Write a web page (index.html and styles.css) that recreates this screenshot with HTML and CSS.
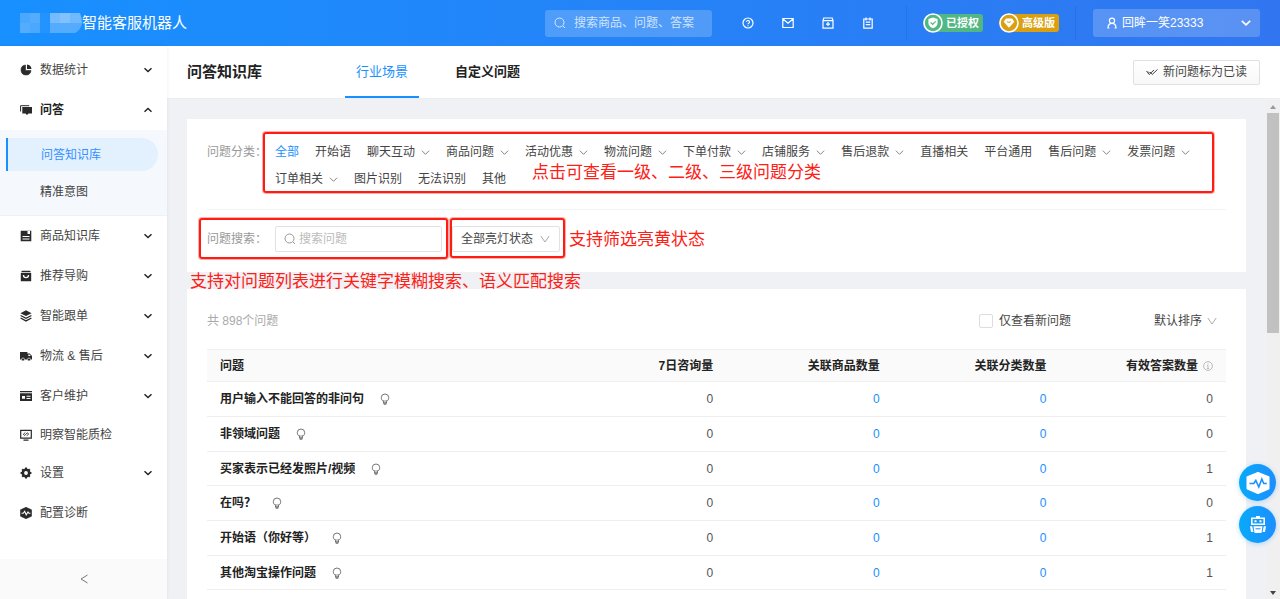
FILE: index.html
```html
<!DOCTYPE html>
<html lang="zh-CN">
<head>
<meta charset="utf-8">
<title>智能客服机器人</title>
<link rel="stylesheet" href="styles.css">
</head>
<body>
<svg class="defs" aria-hidden="true">
  <symbol id="chev" viewBox="0 0 10 10"><path d="M1 3l4 4 4-4" fill="none" stroke="currentColor"/></symbol>
  <symbol id="chev-deep" viewBox="0 0 10 10"><path d="M.8 2L5 8l4.200-6" fill="none" stroke="currentColor"/></symbol>
  <symbol id="chev-b" viewBox="0 0 10 10"><path d="M1.500 3.200L5 6.600l3.500-3.400" fill="none" stroke="currentColor" stroke-width="1.400"/></symbol>
  <symbol id="search" viewBox="0 0 12 12"><circle cx="5.500" cy="5.500" r="4.500" fill="none" stroke="currentColor"/><path d="M9 9l2 2" stroke="currentColor"/></symbol>
  <symbol id="bulb" viewBox="0 0 12 12"><path d="M4.500 8.300C3 7.600 2.300 6.300 2.300 4.700a3.700 3.700 0 0 1 7.400 0c0 1.600-.7 2.900-2.200 3.600v2h-3z" fill="none" stroke="currentColor" stroke-width=".9"/><path d="M4.500 9.200h3M4.700 11.300h2.600M4.900 8.300V7M7.100 8.300V7" stroke="currentColor" fill="none" stroke-width=".9"/></symbol>
</svg>

<header class="top">
  <div class="brand">
    <svg width="62" height="20" viewBox="0 0 62 20"><g fill="#fff"><path opacity=".22" d="M0 0h10v10H0zM10 10h10v10H10z"/><path opacity=".26" d="M10 0h10v10H10zM0 10h10v10H0z"/><path opacity=".04" d="M20 0h10v20H20z"/><path opacity=".4" d="M30 0h10v10H30z"/><path opacity=".45" d="M40 0h10v10H40z"/><path opacity=".38" d="M50 0h10q2 5 2 10H50z"/><path opacity=".26" d="M30 10h32q-1 7-7 10H30z"/></g></svg>
    <span>智能客服机器人</span>
  </div>
  <label class="top-search">
    <svg width="12" height="12"><use href="#search"/></svg>
    <input type="text" placeholder="搜索商品、问题、答案" aria-label="搜索商品、问题、答案">
  </label>
  <nav class="top-icons" aria-label="工具">
    <a href="#" aria-label="帮助"><svg width="12" height="12" viewBox="0 0 12 12" fill="none" stroke="currentColor"><circle cx="6" cy="6" r="5" stroke-width="1.200"/><path d="M4.500 5a1.500 1.500 0 1 1 2.200 1.300C6.200 6.600 6 6.800 6 7.300M6 8.200v1.100" stroke-width="1.100"/></svg></a>
    <a href="#" aria-label="邮件"><svg width="12" height="12" viewBox="0 0 12 12" fill="none" stroke="currentColor" stroke-width="1.200"><path d="M.8 1.500h10.400v9H.8zM1 2l5 4.300L11 2"/></svg></a>
    <a href="#" aria-label="下载"><svg width="12" height="12" viewBox="0 0 12 12" fill="none" stroke="currentColor" stroke-width="1.200"><path d="M1.800 1h8.400l.8 2.500v7.700H1V3.500zM1 3.700h10M6 5v4M4 7.200h4"/></svg></a>
    <a href="#" aria-label="记事"><svg width="12" height="12" viewBox="0 0 12 12" fill="none" stroke="currentColor" stroke-width="1.200"><path d="M1.800 2h8.400v9.200H1.800zM4 .4v3M8 .4v3M3.800 5.200h4.500M3.800 7.700h4.500"/></svg></a>
  </nav>
  <div class="badges">
    <span class="badge green"><svg width="20" height="20" viewBox="0 0 20 20"><circle cx="10" cy="10" r="9" fill="#52b883" stroke="#fff" stroke-width="1.600"/><path d="M10 4.600l4.600 1.500v3.800c0 2.600-2 4.500-4.600 5.400-2.600-.9-4.600-2.800-4.600-5.400V6.100z" fill="#fff"/><path d="M7.700 9.500l1.900 1.900 3.100-3" fill="none" stroke="#52b883" stroke-width="1.300"/></svg>已授权</span>
    <span class="badge gold"><svg width="20" height="20" viewBox="0 0 20 20"><circle cx="10" cy="10" r="9" fill="#d9a012" stroke="#fff" stroke-width="1.600"/><path d="M7 5.500h6l2.300 3.200L10 14.800 4.700 8.700z" fill="#fff"/><path d="M8 8.600q2 1.600 4 0" fill="none" stroke="#d9a012"/></svg>高级版</span>
  </div>
  <button class="user" type="button">
    <svg width="12" height="12" viewBox="0 0 12 12" fill="none" stroke="currentColor" stroke-width="1.200"><circle cx="6" cy="3.700" r="2.600"/><path d="M2 11c0-2.800 1.500-4.600 4-4.600s4 1.800 4 4.600M1.400 11h2M8.600 11h2"/></svg>
    <span>回眸一笑23333</span>
    <svg width="12" height="12"><use href="#chev-b"/></svg>
  </button>
</header>

<div class="shell">
  <aside class="side">
    <nav class="menu" aria-label="主菜单">
      <a class="item" href="#"><svg class="ico" viewBox="0 0 12 12"><path d="M5.500 1v5.500H11A5 5 0 1 1 5.500 1z" fill="currentColor" stroke="currentColor" stroke-width=".6"/><path d="M7 .5A5 5 0 0 1 11.500 5H7z" fill="currentColor"/></svg><span>数据统计</span><svg class="arrow"><use href="#chev-b"/></svg></a>
      <a class="item open" href="#"><svg class="ico" viewBox="0 0 12 12"><path d="M.6 7.500V1.700h8.600" fill="none" stroke="currentColor"/><path d="M2.300 3H12v6.500H8.500L7 11 5.500 9.500H2.300z" fill="currentColor"/></svg><span>问答</span><svg class="arrow"><use href="#chev-b"/></svg></a>
      <div class="sub">
        <a class="active" href="#">问答知识库</a>
        <a href="#">精准意图</a>
      </div>
      <a class="item" href="#"><svg class="ico" viewBox="0 0 12 12"><path fill-rule="evenodd" d="M1 .8h10.300v10.400H.7V1zM2.500 6v1h7V6zM2.500 8.500v1h7v-1zM7.500 1v3H10V1z" fill="currentColor"/></svg><span>商品知识库</span><svg class="arrow"><use href="#chev-b"/></svg></a>
      <a class="item" href="#"><svg class="ico" viewBox="0 0 12 12"><path d="M2 .8h8l1 1.500H1zM.8 3h10.400v8.200H.8z" fill="currentColor"/><path d="M3.500 5c0 3.500 5 3.500 5 0" fill="none" stroke="#fff" stroke-width="1.300"/></svg><span>推荐导购</span><svg class="arrow"><use href="#chev-b"/></svg></a>
      <a class="item" href="#"><svg class="ico" viewBox="0 0 12 12"><path d="M6 .3l5.600 2.900L6 6.100.4 3.200z" fill="currentColor"/><path d="M.6 5.500L6 8.300l5.400-2.800M.6 8L6 10.900 11.400 8" fill="none" stroke="currentColor" stroke-width="1.300"/></svg><span>智能跟单</span><svg class="arrow"><use href="#chev-b"/></svg></a>
      <a class="item" href="#"><svg class="ico" viewBox="0 0 12 12"><path fill-rule="evenodd" d="M0 2h7.400v1.500h2.300L12 6v3.500H0zM8.300 4.500V6h2.500L9.500 4.500z" fill="currentColor"/><g fill="currentColor" stroke="#fff" stroke-width=".6"><circle cx="3" cy="9.500" r="1.500"/><circle cx="9" cy="9.500" r="1.500"/></g></svg><span>物流 &amp; 售后</span><svg class="arrow"><use href="#chev-b"/></svg></a>
      <a class="item" href="#"><svg class="ico" viewBox="0 0 12 12"><path fill-rule="evenodd" d="M0 1h12v1.300H0zM0 3.200h12V11H0zM2 6v2.800h3V6zM6.500 5.700v1h4v-1zM6.500 8v1h4V8z" fill="currentColor"/></svg><span>客户维护</span><svg class="arrow"><use href="#chev-b"/></svg></a>
      <a class="item short" href="#"><svg class="ico" viewBox="0 0 12 12" fill="none" stroke="currentColor" stroke-width="1.200"><path d="M.7 1.300h10.600v7.900H.7zM3.500 11.200h5"/><path d="M5.300 3.500L3.300 5.300l1.400 1.200 2.600-2.700 1.400 1.200-2 1.800" stroke-width=".9"/></svg><span>明察智能质检</span></a>
      <a class="item" href="#"><svg class="ico" viewBox="0 0 12 12"><circle cx="6" cy="6" r="3.200" fill="none" stroke="currentColor" stroke-width="2.600"/><path d="M6 .6v2M6 9.400v2M.6 6h2M9.400 6h2M2.200 2.200l1.400 1.400M8.400 8.400l1.400 1.400M9.800 2.200L8.400 3.600M3.600 8.400L2.200 9.800" stroke="currentColor" stroke-width="2"/></svg><span>设置</span><svg class="arrow"><use href="#chev-b"/></svg></a>
      <a class="item" href="#"><svg class="ico" viewBox="0 0 12 12"><path d="M6 .3l5.500 2.500v6.400L6 11.700.5 9.200V2.800z" fill="currentColor" stroke="currentColor" stroke-linejoin="round" stroke-width=".6"/><path d="M1.500 6.300h1.700l1.500-1.900 1.500 3.400L8 5l.9 1.300h1.600" fill="none" stroke="#fff" stroke-width="1.100"/></svg><span>配置诊断</span></a>
    </nav>
    <button class="collapse" type="button" aria-label="收起菜单"><svg width="10" height="10" viewBox="0 0 10 10"><path d="M8.500 1L2 5l6.500 4" fill="none" stroke="currentColor"/></svg></button>
  </aside>

  <main class="main">
    <div class="head">
      <h1>问答知识库</h1>
      <nav class="tabs" aria-label="页签">
        <a class="on" href="#">行业场景</a>
        <a href="#">自定义问题</a>
      </nav>
      <button class="read" type="button"><svg width="12" height="12" viewBox="0 0 12 12" fill="none" stroke="currentColor"><path d="M.5 5l2.700 3.500L8 4M4 6l2.200 2.500L11.500 3.500M2 5.500L3.500 7"/></svg>新问题标为已读</button>
    </div>

    <div class="body">
      <div class="content">
        <section class="card">
          <div class="row filters">
            <span class="label">问题分类：</span>
            <div class="cats">
              <a class="on" href="#">全部</a>
              <a href="#">开始语</a>
              <a href="#">聊天互动<svg><use href="#chev"/></svg></a>
              <a href="#">商品问题<svg><use href="#chev"/></svg></a>
              <a href="#">活动优惠<svg><use href="#chev"/></svg></a>
              <a href="#">物流问题<svg><use href="#chev"/></svg></a>
              <a href="#">下单付款<svg><use href="#chev"/></svg></a>
              <a href="#">店铺服务<svg><use href="#chev"/></svg></a>
              <a href="#">售后退款<svg><use href="#chev"/></svg></a>
              <a href="#">直播相关</a>
              <a href="#">平台通用</a>
              <a href="#">售后问题<svg><use href="#chev"/></svg></a>
              <a href="#">发票问题<svg><use href="#chev"/></svg></a>
              <a href="#">订单相关<svg><use href="#chev"/></svg></a>
              <a href="#">图片识别</a>
              <a href="#">无法识别</a>
              <a href="#">其他</a>
              <div class="mark mark-cats"></div>
              <p class="note note-cats">点击可查看一级、二级、三级问题分类</p>
            </div>
          </div>
          <div class="row finder">
            <div class="field">
              <label class="label" for="q">问题搜索：</label>
              <span class="box">
                <svg width="12" height="12"><use href="#search"/></svg>
                <input id="q" type="text" placeholder="搜索问题">
              </span>
              <div class="mark mark-field"></div>
              <p class="note note-field">支持对问题列表进行关键字模糊搜索、语义匹配搜索</p>
            </div>
            <div class="pick">
              <select aria-label="亮灯状态"><option>全部亮灯状态</option></select>
              <svg><use href="#chev-deep"/></svg>
              <div class="mark mark-pick"></div>
              <p class="note note-pick">支持筛选亮黄状态</p>
            </div>
          </div>
        </section>

        <section class="card list">
          <div class="bar">
            <span class="total">共 898个问题</span>
            <label class="only"><input type="checkbox">仅查看新问题</label>
            <div class="sort">
              <select aria-label="排序"><option>默认排序</option></select>
              <svg><use href="#chev-deep"/></svg>
            </div>
          </div>
          <table>
            <thead>
              <tr><th>问题</th><th>7日咨询量</th><th>关联商品数量</th><th>关联分类数量</th><th>有效答案数量<svg class="info" viewBox="0 0 10 10" fill="none" stroke="currentColor" stroke-width=".8"><circle cx="5" cy="5" r="4.400"/><path d="M5 2.300v1M5 4.300v3.200M4 7.500h2M4.200 4.400H5"/></svg></th></tr>
            </thead>
            <tbody>
              <tr><td>用户输入不能回答的非问句<svg class="bulb"><use href="#bulb"/></svg></td><td>0</td><td><a href="#">0</a></td><td><a href="#">0</a></td><td>0</td></tr>
              <tr><td>非领域问题<svg class="bulb"><use href="#bulb"/></svg></td><td>0</td><td><a href="#">0</a></td><td><a href="#">0</a></td><td>0</td></tr>
              <tr><td>买家表示已经发照片/视频<svg class="bulb"><use href="#bulb"/></svg></td><td>0</td><td><a href="#">0</a></td><td><a href="#">0</a></td><td>1</td></tr>
              <tr><td>在吗？<svg class="bulb"><use href="#bulb"/></svg></td><td>0</td><td><a href="#">0</a></td><td><a href="#">0</a></td><td>0</td></tr>
              <tr><td>开始语（你好等）<svg class="bulb"><use href="#bulb"/></svg></td><td>0</td><td><a href="#">0</a></td><td><a href="#">0</a></td><td>1</td></tr>
              <tr><td>其他淘宝操作问题<svg class="bulb"><use href="#bulb"/></svg></td><td>0</td><td><a href="#">0</a></td><td><a href="#">0</a></td><td>1</td></tr>
            </tbody>
          </table>
        </section>
      </div>
      <div class="scroll" aria-hidden="true">
        <svg width="8" height="14" viewBox="0 0 8 14"><path d="M1 10l3-4 3 4z" fill="#999"/></svg>
        <span class="thumb"></span>
        <svg class="down" width="8" height="14" viewBox="0 0 8 14"><path d="M1 6l3 4 3-4z" fill="#444"/></svg>
      </div>
    </div>
  </main>
</div>

<div class="float">
  <button type="button" aria-label="诊断"><svg width="24" height="24" viewBox="0 0 24 24"><path d="M12 2l10.500 4.300v11.200L12 22 1.500 17.500V6.300z" fill="#fff" stroke="#fff" stroke-linejoin="round" stroke-width="2"/><path d="M3.500 12.500h4.300l2-3 3 6.500 3-8 2 4.500h3" fill="none" stroke="#1890ff" stroke-width="1.600"/></svg></button>
  <button type="button" aria-label="机器人"><svg width="18" height="18" viewBox="0 0 18 18"><path fill-rule="evenodd" d="M7 0h4v1.500h5V9H2V1.500h5zM3.600 3v4.500h10.800V3z" fill="#fff"/><path d="M5.500 4.300h2v2h-2zM10.500 4.300h2v2h-2zM4.500 10.300h9l-1 6.700h-7zM1 10.300h2.200L4.500 16H2zM17 10.300h-2.200L13.500 16H16z" fill="#fff"/><path d="M6.500 12.800h5" stroke="#1890ff"/></svg></button>
</div>
</body>
</html>
```
FILE: styles.css
```css
* { box-sizing: border-box; }

body {
  margin: 0;
  height: 100vh;
  display: flex;
  flex-direction: column;
  overflow: hidden;
  font: 12px/18px "Liberation Sans", "Noto Sans CJK SC", sans-serif;
  color: #444;
  background: #eff1f5;
}

a { color: inherit; text-decoration: none; }
button, input, select { font: inherit; color: inherit; margin: 0; }
svg { flex: none; }
.defs { display: none; }

/* top bar */
.top {
  flex: none;
  height: 46px;
  padding: 0 20px;
  display: flex;
  align-items: center;
  color: #fff;
  background: linear-gradient(90deg, #1890ff, #3176f0);
}
.brand { flex: 1; display: flex; align-items: center; font-size: 15px; }
.top-search {
  width: 167px;
  height: 27px;
  padding: 0 9px;
  display: flex;
  align-items: center;
  gap: 8px;
  border-radius: 3px;
  background: rgba(255, 255, 255, .2);
  color: #d8e8ff;
}
.top-search input { width: 100%; min-width: 0; padding: 0; border: 0; outline: 0; background: none; }
.top-search input::placeholder { color: #d0e4ff; }
.top-icons { display: flex; gap: 28px; padding: 0 32px 0 30px; }
.top-icons a { display: flex; }
.badges {
  height: 34px;
  padding: 0 16px;
  display: flex;
  align-items: center;
  gap: 16px;
  border: solid rgba(0, 40, 160, .12);
  border-width: 0 1px;
}
.badge {
  height: 18px;
  width: 60px;
  display: flex;
  align-items: center;
  gap: 3px;
  border-radius: 9px 3px 3px 9px;
  font-size: 11px;
  font-weight: bold;
}
.green { background: #52b883; }
.gold { background: #d9a012; }
.user {
  width: 167px;
  height: 28px;
  margin-left: 17px;
  padding: 0 8px 0 13px;
  display: flex;
  align-items: center;
  gap: 4px;
  border: 0;
  border-radius: 3px;
  text-align: left;
  background: rgba(255, 255, 255, .2);
}
.user span { flex: 1; }

.shell { flex: 1; min-height: 0; display: flex; }

/* side menu */
.side {
  flex: none;
  width: 167px;
  display: flex;
  flex-direction: column;
  background: #fff;
  box-shadow: 0 0 3px rgba(0, 20, 60, .08);
  z-index: 1;
}
.menu { flex: 1; padding-top: 4px; }
.item { height: 40px; padding: 0 14px 0 20px; display: flex; align-items: center; gap: 8px; }
.item span { flex: 1; }
.item.short { height: 37px; }
.ico { width: 12px; height: 12px; color: #2a2a2a; }
.arrow { width: 10px; height: 10px; color: #222; }
.open { font-weight: bold; color: #222; }
.open .arrow { transform: rotate(180deg); }
.sub { padding: 8px 9px 7px 6px; display: grid; gap: 4px; background: #f5f9fd; border-bottom: 1px solid #edf1f5; }
.sub a { height: 33px; padding-left: 34px; display: flex; align-items: center; }
.sub .active { padding-left: 33px; border-left: 2px solid #1890ff; border-radius: 0 17px 17px 0; background: #e3f0fe; color: #3390ff; }
.collapse { height: 40px; border: 0; background: #fafafa; color: #777; display: grid; place-items: center; }

/* page heading */
.main { flex: 1; min-width: 0; display: flex; flex-direction: column; }
.head { flex: none; height: 53px; padding: 0 20px; display: flex; align-items: center; background: #fff; border-bottom: 1px solid #ebedf0; }
.head h1 { margin: 0 83px 0 0; font-size: 15px; line-height: 22px; color: #222; }
.tabs { flex: 1; align-self: stretch; display: flex; gap: 25px; font-size: 13px; font-weight: bold; color: #222; }
.tabs a { padding: 0 11px; display: flex; align-items: center; border: solid transparent; border-width: 2px 0; }
.tabs .on { color: #1890ff; border-bottom-color: #1890ff; font-weight: normal; }
.read {
  height: 25px;
  padding: 0 12px;
  display: flex;
  align-items: center;
  gap: 5px;
  border: 1px solid #e0e0e0;
  border-radius: 2px;
  background: linear-gradient(#fff, #f8f8f8);
}

/* cards */
.body { flex: 1; min-height: 0; display: flex; }
.content { flex: 1; min-width: 0; padding: 20px 20px 0; display: flex; flex-direction: column; gap: 17px; }
.card { padding: 20px; background: #fff; }
.row { display: flex; }
.label { flex: none; width: 68px; color: #999; white-space: nowrap; }
.filters { padding-bottom: 16px; border-bottom: 1px solid #f3f3f3; line-height: 27px; }
.cats { flex: 1; position: relative; display: flex; flex-wrap: wrap; column-gap: 16px; }
.cats a { display: flex; align-items: center; gap: 6px; }
.cats svg { width: 9px; height: 9px; color: #777; }
.cats .on { color: #1890ff; }
.finder { padding-top: 16px; gap: 10px; }
.field { position: relative; display: flex; align-items: center; }
.box { width: 167px; height: 26px; padding: 0 8px; display: flex; align-items: center; gap: 3px; border: 1px solid #e2e2e2; border-radius: 2px; color: #999; }
.box input { width: 100%; min-width: 0; padding: 0; border: 0; outline: 0; background: none; }
.box input::placeholder { color: #bbb; }
.pick, .sort { position: relative; display: flex; align-items: center; }
.pick select, .sort select { appearance: none; background: none; outline: 0; }
.pick select { width: 108px; height: 26px; padding: 0 8px; border: 1px solid #e2e2e2; border-radius: 2px; }
.pick svg, .sort svg { position: absolute; right: 10px; width: 10px; height: 10px; color: #aaa; pointer-events: none; }

/* red annotations over the panel */
.mark { position: absolute; border: 2px solid #ff1c12; border-radius: 3px; box-shadow: 0 0 0 1px rgba(255, 28, 18, .35); pointer-events: none; }
.mark-cats { inset: -7px 12px 0 -12px; }
.mark-field { inset: -8px -6px -7px -8px; }
.mark-pick { inset: -8px -5px -6px -2px; }
.note { position: absolute; margin: 0; font-size: 17px; line-height: 24px; color: #ff2015; white-space: nowrap; pointer-events: none; }
.note-cats { left: 257px; top: 22px; }
.note-field { left: -17px; top: 44px; }
.note-pick { left: 117px; top: 2px; }

/* question list */
.list { flex: 1; }
.bar { height: 23px; margin-bottom: 17px; display: flex; align-items: center; }
.total { flex: 1; color: #aaa; }
.only { display: flex; align-items: center; gap: 6px; margin-right: 83px; }
.only input { appearance: none; width: 14px; height: 14px; border: 1px solid #ddd; border-radius: 2px; background: #fff; }
.sort select { width: 72px; padding: 0; border: 0; }
.sort svg { right: 9px; }
table { width: 100%; table-layout: fixed; border-collapse: separate; border-spacing: 0; }
th, td { height: 35px; padding: 0 13px; text-align: right; border-bottom: 1px solid #eee; }
th { height: 33px; background: #fafafa; border-top: 1px solid #f0f0f0; color: #222; white-space: nowrap; }
tr:nth-child(3n) td { height: 34px; }
th:first-child { width: 34.6%; }
th:first-child, td:first-child { text-align: left; }
td:first-child { color: #222; font-weight: bold; }
td { color: #555; }
td a { color: #1890ff; }
.bulb { width: 12px; height: 12px; margin-left: 15px; color: #666; vertical-align: -2px; }
.info { width: 10px; height: 10px; margin-left: 5px; color: #aaa; vertical-align: -1px; }

/* scroll rail */
.scroll { flex: none; width: 14px; display: flex; flex-direction: column; align-items: center; background: #f0f0f0; }
.thumb { width: 12px; height: 44%; background: #c1c1c1; }
.down { margin-top: auto; }

/* floating shortcuts */
.float { position: fixed; right: 4px; bottom: 56px; z-index: 2; display: grid; gap: 5px; }
.float button { width: 37px; height: 37px; padding: 0; display: grid; place-items: center; border: 0; border-radius: 50%; background: linear-gradient(90deg, #08aaf8, #1c8eff); box-shadow: 0 1px 5px rgba(24, 144, 255, .3); }
```
